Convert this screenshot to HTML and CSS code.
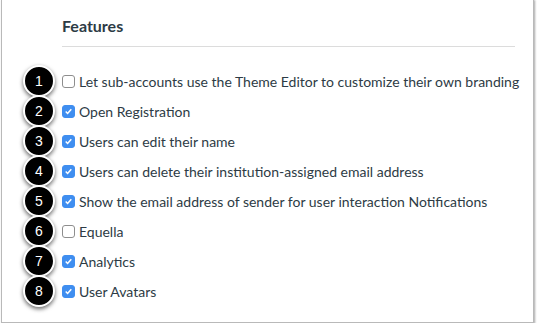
FILE: index.html
```html
<!DOCTYPE html>
<html lang="en">
  <head>
    <meta charset="UTF-8">
    <title>Features</title>
    <link rel="stylesheet" href="styles.css">
  </head>
  <body>
    <div class="panel">
      <h2>Features</h2>
      <ul class="features">
        <li><span class="step">1</span><span class="box"></span>Let sub-accounts use the Theme Editor to customize their own branding</li>
        <li><span class="step">2</span><span class="box checked"></span>Open Registration</li>
        <li><span class="step">3</span><span class="box checked"></span>Users can edit their name</li>
        <li><span class="step">4</span><span class="box checked"></span>Users can delete their institution-assigned email address</li>
        <li><span class="step">5</span><span class="box checked"></span>Show the email address of sender for user interaction Notifications</li>
        <li><span class="step">6</span><span class="box"></span>Equella</li>
        <li><span class="step">7</span><span class="box checked"></span>Analytics</li>
        <li><span class="step">8</span><span class="box checked"></span>User Avatars</li>
      </ul>
    </div>
  </body>
</html>
```

FILE: styles.css
```css
body {
  margin: 0;
  font-family: Lato, "Helvetica Neue", Arial, sans-serif;
  color: #2d3b45;
  background-color: #fff;
}
.panel {
  margin: -1px 0 0 1px;
  width: 533px;
  height: 324px;
  box-sizing: border-box;
  padding: 0 18px 0 60px;
  border: 1px solid #b9b9b9;
  box-shadow: 1px 1px 2px rgba(0, 0, 0, 0.35);
  background-color: #fff;
}
h2 {
  margin: 0;
  padding-top: 17px;
  padding-bottom: 11px;
  font-size: 16px;
  font-weight: bold;
  line-height: 18px;
  border-bottom: 1px solid #dcdcdc;
}
.features {
  list-style: none;
  margin: 0;
  padding: 19px 0 0 0;
}
.features li {
  display: flex;
  align-items: center;
  height: 30px;
  font-size: 14px;
  white-space: nowrap;
}
.step {
  flex: none;
  position: relative;
  z-index: 1;
  display: flex;
  align-items: center;
  justify-content: center;
  width: 32px;
  height: 32px;
  margin: -1px 7px -1px -39px;
  box-sizing: border-box;
  border: 2px solid #fff;
  border-radius: 50%;
  background-color: #000;
  color: #fff;
  font-family: "Liberation Sans", Arial, sans-serif;
  font-size: 14px;
  box-shadow: 0 2px 4px rgba(0, 0, 0, 0.6);
}
.box {
  flex: none;
  width: 13px;
  height: 13px;
  margin-right: 4px;
  box-sizing: border-box;
  border: 1px solid #8e8e8e;
  border-radius: 3px;
  background-color: #fff;
}
.box.checked {
  border-color: #3f8ef0;
  background-color: #3f8ef0;
  background-image: url("data:image/svg+xml,%3Csvg xmlns='http://www.w3.org/2000/svg' viewBox='0 0 13 13'%3E%3Cpath d='M3.2 6.6 5.4 8.8 9.8 3.8' fill='none' stroke='white' stroke-width='1.8'/%3E%3C/svg%3E");
  background-position: center;
  background-repeat: no-repeat;
}
```
